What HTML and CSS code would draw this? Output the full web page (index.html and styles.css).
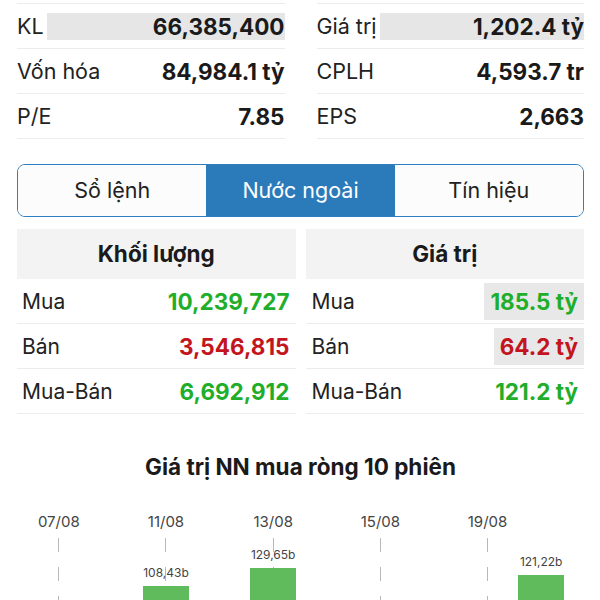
FILE: index.html
```html
<!DOCTYPE html>
<html>
<head>
	<meta charset="utf-8">
	<title>Nước ngoài</title>
	<link rel="stylesheet" href="styles.css">
</head>
<body>
	<div class="page">
		<!-- thông tin chung -->
		<div class="stats">
			<div class="stat-col">
				<div class="stat-row"><span class="stat-label">KL</span><span class="stat-value flash">66,385,400</span></div>
				<div class="stat-row"><span class="stat-label">Vốn hóa</span><span class="stat-value">84,984.1 tỷ</span></div>
				<div class="stat-row"><span class="stat-label">P/E</span><span class="stat-value">7.85</span></div>
			</div>
			<div class="stat-col">
				<div class="stat-row"><span class="stat-label">Giá trị</span><span class="stat-value flash">1,202.4 tỷ</span></div>
				<div class="stat-row"><span class="stat-label">CPLH</span><span class="stat-value">4,593.7 tr</span></div>
				<div class="stat-row"><span class="stat-label">EPS</span><span class="stat-value">2,663</span></div>
			</div>
		</div>

		<!-- tab -->
		<div class="tabs">
			<div class="tab">Sổ lệnh</div>
			<div class="tab active">Nước ngoài</div>
			<div class="tab">Tín hiệu</div>
		</div>

		<!-- khối ngoại -->
		<div class="foreign">
			<div class="ftable">
				<div class="fhead">Khối lượng</div>
				<div class="frow"><span class="flabel">Mua</span><span class="fval up">10,239,727</span></div>
				<div class="frow"><span class="flabel">Bán</span><span class="fval down">3,546,815</span></div>
				<div class="frow"><span class="flabel">Mua-Bán</span><span class="fval up">6,692,912</span></div>
			</div>
			<div class="ftable">
				<div class="fhead">Giá trị</div>
				<div class="frow"><span class="flabel">Mua</span><span class="fval up flash">185.5 tỷ</span></div>
				<div class="frow"><span class="flabel">Bán</span><span class="fval down flash">64.2 tỷ</span></div>
				<div class="frow"><span class="flabel">Mua-Bán</span><span class="fval up">121.2 tỷ</span></div>
			</div>
		</div>

		<!-- biểu đồ -->
		<div class="chart-title">Giá trị NN mua ròng 10 phiên</div>
		<div class="chart">
			<div class="col"><div class="date">07/08</div><div class="track grid"></div></div>
			<div class="col"><div class="date"></div><div class="track"></div></div>
			<div class="col"><div class="date">11/08</div><div class="track grid"><span class="bar-val">108,43b</span><div class="bar" style="height:92px"></div></div></div>
			<div class="col"><div class="date"></div><div class="track"></div></div>
			<div class="col"><div class="date">13/08</div><div class="track grid"><span class="bar-val">129,65b</span><div class="bar" style="height:110px"></div></div></div>
			<div class="col"><div class="date"></div><div class="track"></div></div>
			<div class="col"><div class="date">15/08</div><div class="track grid"></div></div>
			<div class="col"><div class="date"></div><div class="track"></div></div>
			<div class="col"><div class="date">19/08</div><div class="track grid"></div></div>
			<div class="col"><div class="date"></div><div class="track"><span class="bar-val">121,22b</span><div class="bar" style="height:103px"></div></div></div>
		</div>
	</div>
</body>
</html>
```

FILE: styles.css
```css
*{
	margin: 0;
	padding: 0;
	box-sizing: border-box;
}
body{
	background: #fff;
	color: #1a1a1a;
	font-family: Inter, "Noto Sans", sans-serif;
	font-size: 21px;
	overflow: hidden;
}
.page{
	padding: 3px 16px 0 17px;
}

/* thông tin chung */
.stats{
	display: grid;
	grid-template-columns: 1fr 1fr;
	column-gap: 32px;
}
.stat-col{
	border-top: 1px solid #ececec;
}
.stat-row{
	display: flex;
	align-items: center;
	height: 45px;
	border-bottom: 1px solid #ececec;
}
.stat-label{
	color: #222;
	font-size: 21.5px;
}
.stat-value{
	flex: 1;
	margin-left: 3px;
	text-align: right;
	font-weight: 700;
	font-size: 22.5px;
	line-height: 27px;
}
.stat-value.flash{
	background: #e6e6e6;
}

/* tab */
.tabs{
	display: grid;
	grid-template-columns: repeat(3, 1fr);
	margin-top: 25px;
	border: 1px solid #2f7ebf;
	border-radius: 8px;
	overflow: hidden;
}
.tab{
	height: 51px;
	line-height: 51px;
	text-align: center;
	font-size: 21.5px;
	color: #222;
	background: #fcfcfc;
}
.tab.active{
	background: #2b7bbb;
	color: #fff;
}

/* khối ngoại */
.foreign{
	display: grid;
	grid-template-columns: 1fr 1fr;
	column-gap: 10px;
	margin-top: 12px;
}
.fhead{
	height: 50px;
	line-height: 50px;
	text-align: center;
	font-weight: 700;
	font-size: 22.5px;
	background: #f3f3f3;
}
.frow{
	display: flex;
	align-items: center;
	height: 45px;
	padding-left: 5px;
	border-bottom: 1px solid #ececec;
}
.ftable:last-child .frow{
	padding-left: 6px;
}
.flabel{
	color: #222;
}
.fval{
	margin-left: auto;
	padding: 0 6px;
	line-height: 37px;
	font-weight: 700;
	font-size: 22.5px;
}
.fval.flash{
	background: #e8e8e8;
}
.up{
	color: #1fae2a;
}
.down{
	color: #c3151d;
}

/* biểu đồ */
.chart-title{
	margin-top: 40px;
	text-align: center;
	font-weight: 700;
	font-size: 22.5px;
	line-height: 26px;
}
.chart{
	display: flex;
	margin: 32px 16px 0 15px;
}
.col{
	flex: 1;
	display: flex;
	flex-direction: column;
	align-items: center;
}
.date{
	height: 20px;
	line-height: 20px;
	font-size: 15px;
	color: #444;
}
.track{
	width: 100%;
	height: 140px;
	margin-top: 6px;
	display: flex;
	flex-direction: column;
	justify-content: flex-end;
	align-items: center;
}
.track.grid{
	background-image: repeating-linear-gradient(to bottom, #b8b8b8 0, #b8b8b8 14px, transparent 14px, transparent 29px);
	background-size: 1px 100%;
	background-position: center top;
	background-repeat: no-repeat;
}
.bar-val{
	font-size: 12px;
	line-height: 13px;
	color: #444;
	margin-bottom: 7px;
}
.bar{
	width: 46px;
	background: #5fbb5c;
}
```
